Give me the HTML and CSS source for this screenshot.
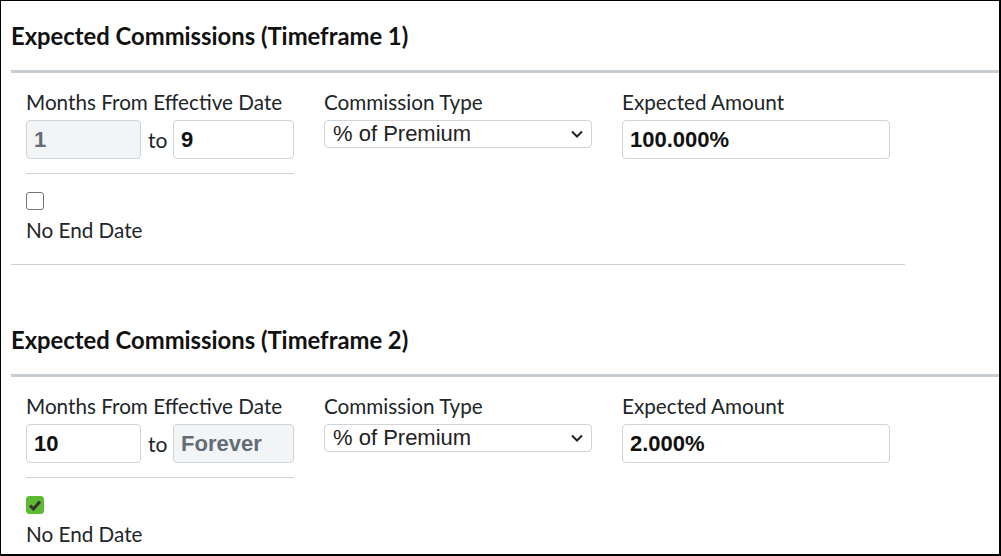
FILE: index.html
```html
<!DOCTYPE html>
<html>
<head>
<meta charset="utf-8">
<link rel="stylesheet" href="styles.css">
</head>
<body>
<div class="frame">
  <section class="tf">
    <h2 class="tf-title">Expected Commissions (Timeframe 1)</h2>
    <div class="tf-row">
      <div class="col">
        <label class="lbl">Months From Effective Date</label>
        <div class="range">
          <input class="inp inp-from" type="text" value="1" disabled>
          <span class="to">to</span>
          <input class="inp inp-to" type="text" value="9">
        </div>
        <hr class="sep">
        <span class="chk"></span>
        <div class="chk-lbl">No End Date</div>
      </div>
      <div class="col">
        <label class="lbl">Commission Type</label>
        <div class="sel-wrap">
          <select class="sel"><option>% of Premium</option></select>
          <svg class="chev" width="14" height="10" viewBox="0 0 14 10"><path d="M2 2.5 L7 7.5 L12 2.5" fill="none" stroke="#222" stroke-width="2"/></svg>
        </div>
      </div>
      <div class="col">
        <label class="lbl">Expected Amount</label>
        <input class="inp inp-amt" type="text" value="100.000%">
      </div>
    </div>
    <hr class="end">
  </section>
  <section class="tf">
    <h2 class="tf-title">Expected Commissions (Timeframe 2)</h2>
    <div class="tf-row">
      <div class="col">
        <label class="lbl">Months From Effective Date</label>
        <div class="range">
          <input class="inp inp-from" type="text" value="10">
          <span class="to">to</span>
          <input class="inp inp-to" type="text" value="Forever" disabled>
        </div>
        <hr class="sep">
        <span class="chk on"><svg width="14" height="12" viewBox="0 0 14 12"><path d="M2 6.5 L5.5 10 L12 2.5" fill="none" stroke="#333" stroke-width="3"/></svg></span>
        <div class="chk-lbl">No End Date</div>
      </div>
      <div class="col">
        <label class="lbl">Commission Type</label>
        <div class="sel-wrap">
          <select class="sel"><option>% of Premium</option></select>
          <svg class="chev" width="14" height="10" viewBox="0 0 14 10"><path d="M2 2.5 L7 7.5 L12 2.5" fill="none" stroke="#222" stroke-width="2"/></svg>
        </div>
      </div>
      <div class="col">
        <label class="lbl">Expected Amount</label>
        <input class="inp inp-amt" type="text" value="2.000%">
      </div>
    </div>
    <hr class="end">
  </section>
</div>
</body>
</html>
```
FILE: styles.css
```css
* { box-sizing: border-box; }
html, body { margin: 0; padding: 0; background: #fff; }
body { width: 1001px; height: 556px; overflow: hidden; }
.frame {
  width: 1001px;
  height: 556px;
  border: 1px solid #000;
  border-right-width: 2px;
  border-bottom-width: 2px;
  padding-left: 10px;
  overflow: hidden;
  font-family: Lato, "Noto Sans", sans-serif;
  color: #212529;
}
.tf-title {
  margin: 0;
  height: 72px;
  padding-top: 20px;
  font-size: 23.8px;
  line-height: 30px;
  font-weight: 700;
  color: #111;
  border-bottom: 3px solid #c8cdd2;
}
.tf-row {
  display: grid;
  grid-template-columns: 298px 298px 298px;
  width: 894px;
}
.col { padding: 0 15px; display: flex; flex-direction: column; align-items: flex-start; }
.lbl {
  display: block;
  margin-top: 14px;
  font-size: 20.7px;
  line-height: 30px;
  color: #212529;
}
.range { display: flex; align-items: center; margin-top: 3px; width: 268px; }
.inp {
  height: 39px;
  border: 1px solid #ced4da;
  border-radius: 4px;
  background: #fff;
  font-family: "Liberation Sans", Arial, sans-serif;
  font-weight: 700;
  font-size: 22px;
  color: #111;
  padding: 0 7px;
  margin: 0;
  outline: none;
}
.inp:disabled { background: #f3f4f6; color: #646c76; }
.inp-from { width: 115px; }
.inp-to { width: 121px; }
.to { font-size: 21px; padding: 0 7px 0 7px; width: 32px; line-height: 39px; }
.inp-amt { width: 268px; margin-top: 3px; }
.sep { width: 268px; margin: 14px 0 0; border: 0; border-top: 1px solid #ced1d5; }
.chk {
  display: flex; align-items: center; justify-content: center;
  width: 18px; height: 18px;
  margin-top: 18px;
  border: 1px solid #757575;
  border-radius: 3px;
  background: #fff;
}
.chk.on { background: #5fba33; border-color: #5fba33; }
.chk-lbl { margin-top: 5px; font-size: 20.7px; line-height: 30px; }
.sel-wrap { position: relative; width: 268px; margin-top: 3px; }
.sel {
  -webkit-appearance: none;
  appearance: none;
  width: 268px;
  height: 28px;
  border: 1px solid #ced4da;
  border-radius: 4px;
  background: #fff;
  font-family: "Liberation Sans", Arial, sans-serif;
  font-size: 22px;
  color: #222;
  padding: 0 0 0 8px;
  margin: 0;
  line-height: 26px;
}
.chev { position: absolute; right: 8px; top: 9px; pointer-events: none; }
.end { width: 894px; margin: 19px 0 40px; border: 0; border-top: 1px solid #ced1d5; }
```
